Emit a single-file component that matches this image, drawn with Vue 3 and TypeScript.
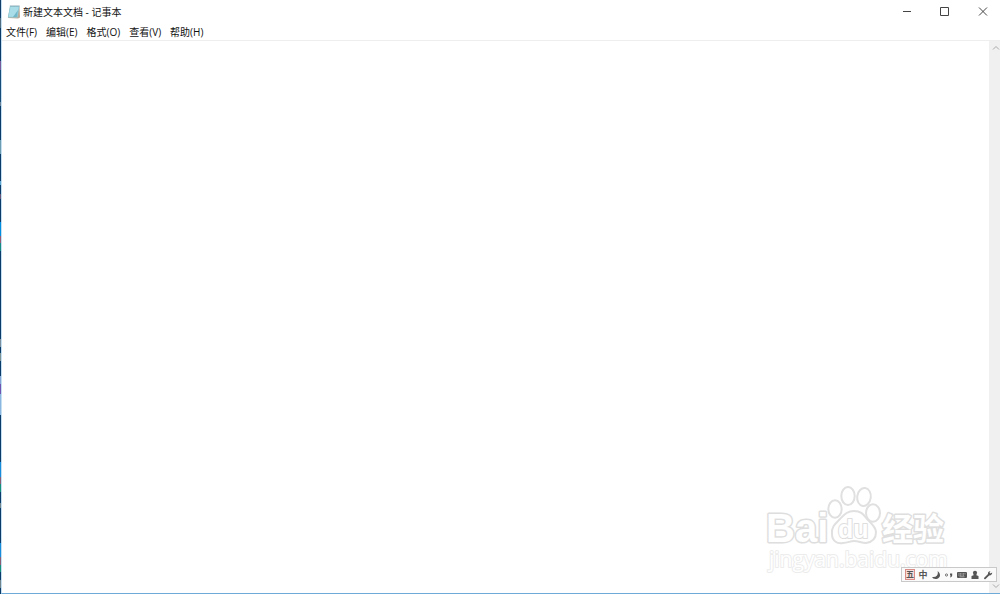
<script setup lang="ts">
import { ref } from 'vue'

const title = '新建文本文档 - 记事本'
const menus: string[] = ['文件(F)', '编辑(E)', '格式(O)', '查看(V)', '帮助(H)']
const content = ref('')
</script>

<template>
  <div class="desktop">
    <main class="window">
      <header class="titlebar">
        <svg class="app-icon" width="14" height="14" viewBox="0 0 14 14" aria-hidden="true">
          <path d="M3 1.5 12.5 1.5 13 12.5 11 13.5 1 13z" fill="#b9aa98" />
          <path d="M3 1 12.5 1 10.5 12.5 .8 12.5z" fill="#8ccbda" />
          <path d="M3.4 2 11.5 2 9.8 11.8 1.7 11.8z" fill="#a9dde7" />
          <path d="M6 12 11 5 9.8 12z" fill="#72b8ca" />
          <path d="M2.8 1H12.7" stroke="#91aeb8" stroke-width="1" />
        </svg>
        <h1>{{ title }}</h1>
        <div class="controls">
          <button type="button" aria-label="最小化">
            <svg width="10" height="10" viewBox="0 0 10 10"><path d="M1 4.5H9" /></svg>
          </button>
          <button type="button" aria-label="最大化">
            <svg width="10" height="10" viewBox="0 0 10 10"><path d="M.5 .5H8.5V8.5H.5z" /></svg>
          </button>
          <button type="button" aria-label="关闭">
            <svg width="10" height="10" viewBox="0 0 10 10"><path d="M1 .5 9 8.5M9 .5 1 8.5" /></svg>
          </button>
        </div>
      </header>
      <nav class="menubar">
        <button v-for="menu in menus" :key="menu" type="button">{{ menu }}</button>
      </nav>
      <section class="editor">
        <textarea v-model="content" aria-label="文本内容" spellcheck="false"></textarea>
        <div class="scrollbar">
          <button type="button" aria-label="向上滚动">
            <svg width="8" height="6" viewBox="0 0 8 6"><path d="M1 4.5 4 1.5 7 4.5" /></svg>
          </button>
          <button type="button" aria-label="向下滚动">
            <svg width="8" height="6" viewBox="0 0 8 6"><path d="M1 1.5 4 4.5 7 1.5" /></svg>
          </button>
        </div>
      </section>
    </main>

    <svg class="watermark" width="200" height="100" viewBox="0 0 200 100" role="img" aria-label="Baidu 经验">
      <g class="outline">
        <ellipse cx="80" cy="29" rx="6.7" ry="8.8" />
        <ellipse cx="93" cy="16" rx="6.7" ry="9" />
        <ellipse cx="109" cy="17" rx="6.8" ry="9" transform="rotate(8 109 17)" />
        <ellipse cx="118" cy="33" rx="7" ry="8.7" />
        <path d="M99 31C92 31 89 35 85 39C81 43 76 47 77 54C77 61 82 64 88 63C93 63 95 61 99 61C104 61 106 63 111 63C118 62 121 58 121 52C121 47 116 43 112 39C108 34 106 31 99 31Z" />
      </g>
      <text class="brand" x="11" y="62">Bai</text>
      <text class="du" x="83" y="58">du</text>
      <text class="cjk" x="127" y="60">经验</text>
      <text class="site" x="14" y="87">jingyan.baidu.com</text>
    </svg>

    <aside class="ime" aria-label="输入法">
      <button type="button" class="wubi" aria-label="五笔">五</button>
      <button type="button" class="lang">中</button>
      <button type="button" aria-label="半角">
        <svg width="10" height="10" viewBox="0 0 10 10"><path d="M6.5 1C10.5 4 9.5 8 5.5 9Q2 9.4 1 7Q4.5 7.5 6 5.5Q7.4 3 6.5 1z" /></svg>
      </button>
      <button type="button" aria-label="中文标点">
        <svg width="10" height="10" viewBox="0 0 10 10"><circle cx="2.5" cy="5" r="1.1" fill="none" stroke="#555" stroke-width=".8" /><path d="M6 3.5H8.2V5.5Q8 7 6.4 7.4L6 6.8Q6.8 6.3 6.8 5.5H6z" /></svg>
      </button>
      <button type="button" aria-label="软键盘">
        <svg width="10" height="10" viewBox="0 0 10 10"><rect y="2" width="10" height="6" rx="1" /><path d="M1.5 3.8H8.5M1.5 5.2H7" stroke="#ddd" stroke-width=".7" stroke-dasharray="1 .5" /><path d="M2.5 6.8H7.5" stroke="#ddd" stroke-width=".6" /></svg>
      </button>
      <button type="button" aria-label="用户">
        <svg width="10" height="10" viewBox="0 0 10 10"><circle cx="5" cy="2.8" r="2.1" /><path d="M3.6 4H6.4V5.3L8.5 6V9H1.5V6L3.6 5.3z" /></svg>
      </button>
      <button type="button" aria-label="设置">
        <svg width="10" height="10" viewBox="0 0 10 10"><path d="M1 8 5 4Q4.5 1.5 7.5 1L6.5 2.6 7.5 3.6 9.2 2.6Q9.2 5.5 6.2 5.4L2.3 9.2Q1 9.5 1 8z" /></svg>
      </button>
    </aside>
  </div>
</template>

<style>
body {
  margin: 0;
}
</style>

<style scoped>
* {
  box-sizing: border-box;
}
.desktop {
  position: relative;
  display: flex;
  min-height: 100vh;
  padding-left: 1px;
  background: linear-gradient(#123e69 0 18px, #506d80 18px 28px, #0b3b68 28px 61px, #765b9b 61px 70px, #174b78 70px 102px, #6a8298 102px 106px, #0b3b68 106px 140px, #6c9caf 140px 154px, #0b3b68 154px 181px, #5ba6d0 181px 185px, #0b3b68 185px 194px, #655475 194px 199px, #0b3b68 199px 222px, #008ee0 222px 236px, #965970 236px 243px, #168b82 243px 251px, #0b3b68 251px 339px, #7c8f9d 339px 347px, #0b3b68 347px 353px, #7c9292 353px 361px, #0b3b68 361px 376px, #82a5d5 376px 384px, #7054b1 384px 394px, #8ab6df 394px 415px, #0b3b68 415px 462px, #168cdb 462px 477px, #8c5c70 477px 484px, #159079 484px 492px, #0b3b68 492px 503px, #71848c 503px 508px, #0b3b68 508px 543px, #168cdb 543px 557px, #8c5c70 557px 565px, #159079 565px 572px, #0b3b68 572px 580px, #71848c 580px 588px, #0b3b68 588px);
  color: #111;
  font-family: "Liberation Sans", "Noto Sans CJK SC", sans-serif;
}
.window {
  flex: 1;
  display: flex;
  flex-direction: column;
  min-width: 0;
  background: #fff;
  border-left: 1px solid #c4dff2;
  border-bottom: 1px solid #6fabd9;
}
button {
  display: flex;
  align-items: center;
  justify-content: center;
  padding: 0;
  border: 0;
  background: none;
  color: inherit;
  font: inherit;
}
.titlebar {
  display: flex;
  align-items: center;
  height: 24px;
  padding-left: 5px;
}
.app-icon {
  margin-right: 2px;
}
h1 {
  flex: 1;
  margin: 0;
  font-family: "Open Sans", "Noto Sans CJK SC", sans-serif;
  font-size: 10px;
  font-weight: 400;
  line-height: 24px;
}
.controls {
  display: flex;
  align-self: stretch;
  gap: 4px;
}
.controls button {
  width: 34px;
}
.controls path {
  fill: none;
  stroke: #444;
  stroke-width: 1;
}
.menubar {
  display: flex;
  gap: 9px;
  height: 17px;
  padding-left: 4px;
  border-bottom: 1px solid #eee;
  font-family: "Open Sans", "Noto Sans CJK SC", sans-serif;
  font-size: 10px;
  line-height: 16px;
}
.editor {
  flex: 1;
  display: flex;
}
textarea {
  flex: 1;
  min-width: 0;
  padding: 2px 4px;
  border: 0;
  outline: 0;
  resize: none;
  overflow: hidden;
  background: #fff;
  font: 12px "Liberation Sans", "Noto Sans CJK SC", sans-serif;
}
.scrollbar {
  display: flex;
  flex-direction: column;
  justify-content: space-between;
  width: 11px;
  background: #f0f0f0;
}
.scrollbar button {
  height: 14px;
  padding-left: 2px;
}
.scrollbar path {
  fill: none;
  stroke: #aaa;
  stroke-width: 1;
}
.watermark {
  position: absolute;
  right: 45px;
  bottom: 14px;
  overflow: visible;
  pointer-events: none;
}
.outline {
  fill: #fff;
  stroke: #e0e0e0;
  stroke-width: 2;
}
.watermark text {
  fill: #fff;
  stroke: #dedede;
  stroke-width: 3;
  stroke-linejoin: round;
  paint-order: stroke;
  font-weight: 700;
}
.watermark .brand {
  font-family: "Liberation Sans", sans-serif;
  font-size: 40px;
}
.watermark .du {
  font-family: "Liberation Sans", sans-serif;
  font-size: 25px;
  stroke-width: 2;
}
.watermark .cjk {
  font-family: "Noto Sans CJK SC", sans-serif;
  font-size: 31px;
}
.watermark .site {
  font-family: "Open Sans", sans-serif;
  font-size: 21px;
  font-weight: 400;
  stroke: #ececec;
  stroke-width: 2;
}
.ime {
  position: absolute;
  right: 3px;
  bottom: 12px;
  display: flex;
  align-items: center;
  gap: 3px;
  height: 15px;
  padding: 0 3px;
  border: 1px solid #c9c9c9;
  background: #fafafa;
  color: #555;
}
.ime button {
  width: 10px;
  height: 11px;
}
.ime svg {
  fill: #555;
}
.ime .wubi {
  border: 1px solid #d98d86;
  background: #f6dedb;
  font-size: 8px;
  font-weight: 700;
  line-height: 8px;
}
.ime .lang {
  font-size: 9px;
  font-weight: 700;
  line-height: 10px;
}
</style>
